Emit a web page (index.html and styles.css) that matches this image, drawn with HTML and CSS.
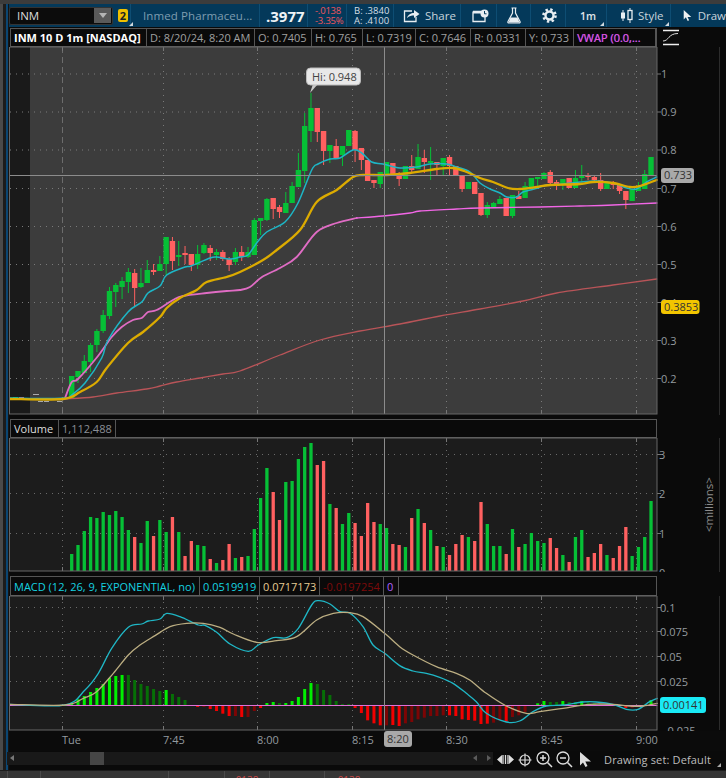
FILE: index.html
```html
<!DOCTYPE html>
<html lang="en">
<head>
<meta charset="utf-8">
<title>INM chart</title>
<link rel="stylesheet" href="styles.css">
</head>
<body>
<div class="top-strip"></div>
<div class="shell">
  <div class="rail"></div>
  <div class="main">
    <header class="toolbar">
      <div class="sec s-sym">
        <div class="combo"><span>INM</span><span class="combo-btn"><i></i></span></div>
        <span class="badge">2</span><i class="corner c-badge"></i>
      </div>
      <div class="sec s-name">Inmed Pharmaceu...</div>
      <div class="sec s-last">.3977</div>
      <div class="sec s-chg"><span>-.0138</span><span>-3.35%</span></div>
      <div class="sec s-ba"><span>B: .3840</span><span>A: .4100</span></div>
      <div class="sec s-share">
        <svg class="ico" width="17" height="15" viewBox="0 0 17 15"><path d="M9 3H1.500V13.500H13V9" fill="none" stroke="#e8eef2" stroke-width="1.300"/><path d="M4 10C5 6.500 8 5 11 5V2L16.500 6 11 10V7.500C8.500 7.500 6 8 4 10Z" fill="#e8eef2"/></svg>
        <span>Share</span>
      </div>
      <div class="sec s-cal">
        <svg class="ico" width="17" height="14" viewBox="0 0 17 14"><path d="M1 2.500H10M1 2.500V12.500H13V8" fill="none" stroke="#e8eef2" stroke-width="1.300"/><rect x="1" y="2" width="9" height="2.500" fill="#e8eef2"/><circle cx="12.500" cy="4.500" r="4" fill="#e8eef2"/><path d="M12.500 2V4.800H14.500" fill="none" stroke="#04395a" stroke-width="1"/></svg>
      </div>
      <div class="sec s-lab">
        <svg class="ico" width="14" height="17" viewBox="0 0 14 17"><path d="M4.500 1H9.500M5.500 1V6L1 14.500Q.5 16 2 16H12Q13.500 16 13 14.500L8.500 6V1" fill="none" stroke="#e8eef2" stroke-width="1.200"/><path d="M3.500 10.500H10.500L12.500 15.500H1.500Z" fill="#e8eef2"/></svg>
      </div>
      <div class="sec s-gear">
        <svg class="ico" width="15" height="15" viewBox="0 0 15 15"><circle cx="7.500" cy="7.500" r="4" fill="none" stroke="#e8eef2" stroke-width="2.400"/><circle cx="7.500" cy="7.500" r="6" fill="none" stroke="#e8eef2" stroke-width="2.600" stroke-dasharray="2.350 2.360"/></svg>
      </div>
      <div class="sec s-tf"><b>1m</b><i class="corner c-tf"></i></div>
      <div class="sec s-style">
        <svg class="ico" width="13" height="15" viewBox="0 0 13 15"><path d="M3 2V13M10 0V15" stroke="#e8eef2" stroke-width="1"/><rect x="1" y="4.500" width="4" height="6" fill="#e8eef2"/><rect x="8" y="2.500" width="4" height="9" fill="#04395a" stroke="#e8eef2" stroke-width="1.300"/></svg>
        <span>Style</span><i class="corner c-style"></i>
      </div>
      <div class="sec s-draw">
        <svg class="ico" width="12" height="15" viewBox="0 0 12 15"><path d="M1 0V13L4 10 6.500 15 8.500 14 6.300 9.500H11.500Z" fill="#f0f0f0"/></svg>
        <span>Draw</span>
      </div>
    </header>

    <section class="panel-head head-price">
      <div class="legend lg-price">
        <span class="cell title">INM 10 D 1m [NASDAQ]</span>
        <span class="cell">D: 8/20/24, 8:20 AM</span>
        <span class="cell">O: 0.7405</span>
        <span class="cell">H: 0.765</span>
        <span class="cell">L: 0.7319</span>
        <span class="cell">C: 0.7646</span>
        <span class="cell">R: 0.0331</span>
        <span class="cell">Y: 0.733</span>
        <span class="cell vwap">VWAP (0.0,...</span>
      </div>
      <svg class="study-ico" width="16" height="17" viewBox="0 0 16 17"><path d="M0 1.500H16M0 15.500H16" stroke="#eee" stroke-width="1.600"/><path d="M0 12C6 12 5 4.500 15 4.500" fill="none" stroke="#ddd" stroke-width="1"/></svg>
    </section>

    <svg class="chart" id="price" width="717" height="368" viewBox="9 47 717 368">
      <rect x="10" y="47" width="20" height="367" class="bg-pre"/>
      <rect x="30" y="47" width="627" height="367" class="bg-reg"/>
      <g id="price-plot"></g>
      <g class="lbl">
        <text x="661" y="78">1</text><text x="661" y="116">0.9</text><text x="661" y="154">0.8</text>
        <text x="661" y="193">0.7</text><text x="661" y="231">0.6</text><text x="661" y="269">0.5</text>
        <text x="661" y="307">0.4</text><text x="661" y="345">0.3</text><text x="661" y="383">0.2</text>
      </g>
      <rect x="661" y="168" width="33" height="15" rx="3" class="tag-grey"/>
      <text x="664" y="179" class="tag-text">0.733</text>
      <rect x="661" y="300" width="38.500" height="14" rx="3" class="tag-gold"/>
      <text x="664" y="311" class="tag-text">0.3853</text>
      <path d="M313 84L310 93L318 84Z" class="hi-tip"/>
      <rect x="306.500" y="68" width="54" height="17" rx="4" class="hi-box"/>
      <text x="312" y="81" class="hi-text">Hi: 0.948</text>
    </svg>

    <section class="panel-head head-sub">
      <div class="legend lg-vol">
        <span class="cell plain">Volume</span>
        <span class="cell dim">1,112,488</span>
      </div>
    </section>
    <svg class="chart" id="volume" width="717" height="134" viewBox="9 438 717 134">
      <rect x="10" y="438" width="647" height="133" class="bg-sub"/>
      <g id="volume-plot"></g>
      <g class="lbl">
        <text x="659" y="459">3</text><text x="659" y="498">2</text><text x="659" y="538">1</text><text x="659" y="577">0</text>
        <text x="0" y="0" class="millions" transform="translate(713 532) rotate(-90)">&lt;millions&gt;</text>
      </g>
    </svg>

    <section class="panel-head head-macd">
      <div class="legend lg-macd">
        <span class="cell cy">MACD (12, 26, 9, EXPONENTIAL, no)</span>
        <span class="cell cy">0.0519919</span>
        <span class="cell tan">0.0717173</span>
        <span class="cell maroon">-0.0197254</span>
        <span class="cell vio">0</span>
      </div>
    </section>
    <svg class="chart" id="macd" width="717" height="155" viewBox="9 596 717 155">
      <rect x="10" y="596" width="647" height="134" class="bg-sub"/>
      <g id="macd-plot"></g>
      <g class="lbl">
        <text x="660" y="612">0.1</text><text x="660" y="636">0.075</text><text x="660" y="661">0.05</text>
        <text x="660" y="686">0.025</text><text x="664" y="735">-0.025</text>
      </g>
      <rect x="660" y="697" width="46" height="16" rx="3" class="tag-cyan"/>
      <text x="663" y="709" class="tag-text">0.00141</text>
      <rect x="9" y="731" width="717" height="20" class="bg-axis"/>
      <g class="lbl">
        <text x="62" y="744">Tue</text><text x="163" y="744">7:45</text><text x="257" y="744">8:00</text>
        <text x="352" y="744">8:15</text><text x="446" y="744">8:30</text><text x="541" y="744">8:45</text><text x="636" y="744">9:00</text>
      </g>
      <rect x="384" y="731" width="28" height="16" rx="3" class="tag-grey"/>
      <text x="387" y="743" class="tag-text">8:20</text>
    </svg>

    <footer class="footer">
      <div class="scroll">
        <i class="arr-l"></i>
        <span class="thumb"></span>
        <i class="arr-l dimmed arr-p"></i>
        <i class="arr-r dimmed"></i>
      </div>
      <svg class="ftool" width="100" height="19" viewBox="0 0 100 19">
        <path d="M0 9.500L5 5V14ZM17 9.500L12 5V14Z" fill="#ddd"/><path d="M6 5V14M8.500 5V14M11 5V14" stroke="#ddd" stroke-width="1.300"/>
        <circle cx="28" cy="10" r="5" fill="none" stroke="#ddd" stroke-width="1.200"/><path d="M28 3.500V16.500M21.500 10H34.500" stroke="#ddd" stroke-width="1.200"/>
        <circle cx="46" cy="8" r="6" fill="none" stroke="#ddd" stroke-width="1.300"/><path d="M50.500 12.500L55 17M43 8H49M46 5V11" stroke="#ddd" stroke-width="1.500"/>
        <circle cx="66" cy="8" r="6" fill="none" stroke="#ddd" stroke-width="1.300"/><path d="M70.500 12.500L75 17M63 8H69" stroke="#ddd" stroke-width="1.500"/>
        <path d="M83 2V15.500L86 12.500 88.500 17 90.500 16 88.300 11.500H94Z" fill="#ddd"/>
      </svg>
      <span class="dset">Drawing set: Default</span>
      <i class="corner c-foot"></i>
    </footer>
  </div>
</div>
<div class="bottom-strip">
  <span class="div d1"></span><span class="div d2"></span><span class="div d3"></span><span class="div d4"></span><span class="div d5"></span><span class="div d6"></span>
  <span class="cut c1">.0138</span>
  <span class="cut c2">.0138</span>
</div>
<script src="chart.js"></script>
</body>
</html>
```
FILE: styles.css
```css
* { box-sizing: border-box; }
html, body { margin: 0; padding: 0; }
body {
  width: 726px; height: 778px; overflow: hidden; position: relative;
  background: #0a0a0a; color: #aaa;
  font-family: "Open Sans", "Noto Sans", sans-serif; font-size: 11px;
}
.top-strip { height: 4px; background: #3c3c3c; }
.shell { display: flex; height: 766px; }
.rail {
  width: 9px; flex: none;
  background: linear-gradient(90deg, #4a4a4a 0 3px, #1c1c1c 3px 6px, #0b4672 6px 8px, #141414 8px);
}
.main { width: 717px; flex: none; display: flex; flex-direction: column; }

.toolbar { display: flex; height: 23px; background: #04395a; flex: none; overflow: hidden; }
.sec {
  position: relative; flex: none; display: flex; align-items: center; height: 23px;
  border-right: 1px solid #0e4d73; white-space: nowrap;
}
.s-sym { width: 122px; gap: 5px; }
.combo {
  width: 104px; height: 18px; display: flex; align-items: center; justify-content: space-between;
  background: #0c0c0c; border: 1px solid #333; border-radius: 2px; padding-left: 7px;
  color: #dcdcdc; font-size: 11.500px;
}
.combo-btn { width: 17px; height: 15px; background: #5a5a5a; display: flex; align-items: center; justify-content: center; margin-right: 1px; }
.combo-btn i { border: 4px solid transparent; border-top: 5px solid #b5b5b5; border-bottom: 0; }
.badge { width: 10px; height: 13px; background: #efc000; border-radius: 2px; color: #222; font-weight: 700; font-size: 11px; line-height: 13px; text-align: center; }
.corner { position: absolute; width: 0; height: 0; border-style: solid; border-width: 0 0 4px 4px; border-color: transparent transparent #cfd8de transparent; }
.c-badge { left: 120px; bottom: 1px; }
.c-tf { right: 2px; bottom: 1px; }
.c-style { right: 1px; bottom: 1px; }
.c-foot { position: absolute; right: 5px; bottom: 3px; border-bottom-color: #aaa; }
.s-name { width: 129px; padding-left: 12px; color: #7f9db0; font-size: 11.500px; letter-spacing: .1px; }
.s-last { width: 48px; padding-left: 6px; color: #eef3f6; font-size: 15px; font-weight: 700; }
.s-chg, .s-ba { flex-direction: column; align-items: flex-start; justify-content: center; font-size: 9.500px; line-height: 10px; }
.s-chg { width: 39px; padding-left: 7px; color: #f0555a; letter-spacing: -.2px; }
.s-ba { width: 47px; padding-left: 7px; color: #d5dee4; }
.s-share { width: 67px; padding-left: 9px; gap: 5px; color: #c8d4dc; font-size: 11.500px; }
.s-cal { width: 36px; padding-left: 11px; }
.s-lab { width: 34px; padding-left: 10px; }
.s-gear { width: 35px; padding-left: 11px; }
.s-tf { width: 41px; padding-left: 14px; color: #e0e6ea; }
.s-tf b { font-size: 10.500px; font-weight: 600; }
.s-style { width: 64px; padding-left: 13px; gap: 5px; color: #c8d4dc; font-size: 11.500px; }
.s-draw { width: 55px; padding-left: 12px; gap: 6px; color: #c8d4dc; font-size: 11.500px; border: 0; }

.panel-head { display: flex; align-items: stretch; flex: none; padding-left: 1px; }
.head-price { height: 19px; margin-top: 1px; }
.head-sub { height: 19px; margin-top: 4px; }
.head-macd { height: 20px; margin-top: 4px; }
.legend { display: grid; width: 647px; height: 100%; background: #0a0a0a; border: 1px solid #555; border-bottom-color: #5f5f5f; }
.lg-price { grid-template-columns: 136px 108px 57px 51px 53px 55px 55px 48px 1fr; }
.lg-vol { grid-template-columns: 48px 57px 1fr; }
.lg-macd { grid-template-columns: 189px 60px 60px 64px 15px 1fr; }
.cell {
  display: flex; align-items: center; padding-left: 3px; border-right: 1px solid #555;
  white-space: nowrap; overflow: hidden; color: #a0a0a0; font-size: 11px;
}
.title { color: #fff; font-weight: 700; font-size: 11px; }
.plain { color: #dedede; }
.dim { color: #8a8f96; }
.cy { color: #16d2e0; }
.tan { color: #e5cb93; }
.maroon { color: #7c0a0a; }
.vio { color: #b060ff; }
.vwap { color: #e84ec8; text-shadow: .5px 0 #6a50ff; }
.study-ico { margin: 1px 0 0 6px; }

.chart { display: block; flex: none; }
.bg-pre { fill: #1a1a1a; }
.bg-reg { fill: #3c3c3c; }
.bg-sub { fill: #1c1c1c; }
.bg-axis { fill: #0b0b0b; }
.lbl text { fill: #949a9f; font-family: "Open Sans", sans-serif; font-size: 11px; }
.lbl .millions { fill: #8d8d8d; font-size: 11.500px; }
.tag-grey { fill: #a9a9a9; }
.tag-gold { fill: #f2c500; }
.tag-cyan { fill: #19e9f5; }
.tag-text { fill: #333; font-family: "Open Sans", sans-serif; font-size: 11px; }
.hi-box { fill: #e8e8e8; stroke: #bbb; }
.hi-tip { fill: #c9c9c9; }
.hi-text { fill: #444; font-family: "Open Sans", sans-serif; font-size: 11px; }
.line { fill: none; stroke-linejoin: round; stroke-linecap: round; }
.l-cyan { stroke: #1db6c6; stroke-width: 1.500; }
.l-gold { stroke: #dcab00; stroke-width: 2.300; }
.l-pink { stroke: #e06cc4; stroke-width: 1.800; }
.l-pink2 { stroke: #f266e6; stroke-width: 1.300; }
.l-red { stroke: #b85458; stroke-width: 1.300; }
.l-mcyan { stroke: #1fb7c6; stroke-width: 1.300; }
.l-mtan { stroke: #bcae82; stroke-width: 1.300; }
.l-zero { stroke: #e070d8; stroke-width: 1; }
.grid-dot { stroke: #7a7a7a; stroke-width: 1; stroke-dasharray: 1 5; fill: none; }
.grid-sub { stroke: #6a6a6a; }
.grid-day { stroke: #6c6c6c; stroke-width: 1; stroke-dasharray: 6 4; }
.tick { stroke: #777; stroke-width: 1; }
.frame { stroke: #666; stroke-width: 1; fill: none; }
.cross { stroke: #8c8c8c; stroke-width: 1; }
.up { fill: #06c036; }
.dn { fill: #ff6060; }
.wick-up { stroke: #06c036; stroke-width: 1; }
.wick-dn { stroke: #ff6060; stroke-width: 1; }
.premark { stroke: #aaa; stroke-width: 1; }
.h-gb { fill: #00f000; }
.h-gd { fill: #066f06; }
.h-rb { fill: #f20000; }
.h-rd { fill: #7c0505; }
.edge { stroke: #2c2c2c; stroke-width: 1; }

.footer { position: relative; display: flex; align-items: center; height: 19px; flex: none; }
.scroll {
  position: relative; width: 486px; height: 13px; margin: 0 0 5px -2px; background: #191919; flex: none;
  display: flex; align-items: center;
}
.thumb { position: absolute; left: 83px; width: 14px; height: 13px; background: #464646; }
.arr-l, .arr-r { position: absolute; width: 0; height: 0; border: 3px solid transparent; }
.arr-l { left: 3px; border-left: 0; border-right: 4px solid #777; }
.arr-p { left: 466px; }
.arr-r { left: 480px; border-right: 0; border-left: 4px solid #777; }
.dimmed { opacity: .7; }
.ftool { flex: none; margin: 0 0 3px 4px; }
.dset { margin: 0 0 3px 7px; color: #bdbdbd; font-size: 11px; letter-spacing: .15px; white-space: nowrap; }

.bottom-strip { position: relative; height: 8px; background: #353535; overflow: hidden; border-top: 1px solid #1c1c1c; }
.div { position: absolute; top: 0; bottom: 0; width: 1px; background: #4a4a4a; }
.d1 { left: 7px; }
.d2 { left: 40px; }
.d3 { left: 168px; }
.d4 { left: 224px; }
.d5 { left: 269px; }
.d6 { left: 324px; }
.cut { position: absolute; top: 2px; color: #d04a4a; font-size: 10px; }
.c1 { left: 233px; }
.c2 { left: 335px; }
```
FILE: chart.js
```js
(function () {
  var NS = 'http://www.w3.org/2000/svg';
  function el(parent, tag, attrs) {
    var n = document.createElementNS(NS, tag);
    for (var k in attrs) n.setAttribute(k, attrs[k]);
    parent.appendChild(n);
    return n;
  }
  function line(p, x1, y1, x2, y2, cls) { el(p, 'line', { x1: x1, y1: y1, x2: x2, y2: y2, 'class': cls }); }
  /* Catmull-Rom through the sampled points, so moving averages read as curves */
  function poly(p, pts, cls) {
    var d = 'M' + pts[0][0] + ' ' + pts[0][1];
    for (var i = 0; i < pts.length - 1; i++) {
      var a = pts[Math.max(i - 1, 0)], b = pts[i], c = pts[i + 1], e = pts[Math.min(i + 2, pts.length - 1)];
      var c1x = b[0] + (c[0] - a[0]) / 6, c1y = b[1] + (c[1] - a[1]) / 6;
      var c2x = c[0] - (e[0] - b[0]) / 6, c2y = c[1] - (e[1] - b[1]) / 6;
      d += 'C' + c1x.toFixed(2) + ' ' + c1y.toFixed(2) + ' ' + c2x.toFixed(2) + ' ' + c2y.toFixed(2) + ' ' + c[0].toFixed(2) + ' ' + c[1].toFixed(2);
    }
    el(p, 'path', { d: d, 'class': 'line ' + cls });
  }
  var X = function (i) { return 71.7 + 6.297 * i; };
  var VX = [62.5, 163.5, 257.5, 352.5, 446.5, 541.5, 636.5];

  function grid(p, top, bottom, ys, sub) {
    var dotCls = 'grid-dot' + (sub ? ' grid-sub' : '');
    ys.forEach(function (y) {
      line(p, 10, y, 657, y, dotCls);
      line(p, 657, y, 661, y, 'tick');
    });
    VX.forEach(function (x, i) {
      line(p, x, top, x, bottom, (i === 0 && !sub) ? 'grid-day' : dotCls);
      line(p, x, top, x, top + 4, 'tick');
      line(p, x, bottom - 4, x, bottom, 'tick');
    });
  }

  /* ---------- price ---------- */
  var C = [
    [376,376,398,398,1],[371,371,377,383,1],[355,361,373,373,1],[343,345,362,372,1],[329,331,345,352,1],
    [310,315,331,333,1],[287,291,316,319,1],[283,285,292,307,1],[277,281,287,299,1],[268,272,282,293,1],
    [269,273,288,306,0],[268,283,287,288,1],[260,270,283,283,1],[264,270,272,275,0],[256,264,271,271,1],
    [237,237,264,275,1],[237,241,261,270,0],[241,255,257,266,1],[246,253,255,264,0],[254,254,265,271,0],
    [245,254,265,269,1],[243,245,253,254,1],[245,248,253,261,0],[249,252,255,260,1],[250,252,259,261,0],
    [257,259,265,271,0],[248,252,262,265,1],[246,252,257,261,0],[247,252,257,258,1],[218,220,255,255,1],
    [218,218,221,235,1],[198,199,220,221,1],[198,198,209,219,0],[205,207,212,218,0],[192,203,213,213,1],
    [182,186,203,203,1],[153,170,187,187,1],[113,126,171,183,1],[93,108,131,142,1],[108,108,132,142,0],
    [131,131,151,165,0],[145,145,151,163,1],[139,146,158,158,0],[146,146,155,166,1],[130,130,146,146,1],
    [130,131,150,162,0],[148,148,160,170,0],[160,160,181,181,0],[180,180,183,188,0],[172,172,184,188,1],
    [162,162,176,176,1],[163,163,175,175,0],[172,173,179,186,0],[166,166,179,179,1],[155,166,170,172,0],
    [144,157,169,169,1],[150,158,162,173,0],[147,161,163,180,1],[162,162,165,175,0],[158,158,166,175,1],
    [155,157,166,175,0],[166,166,175,175,0],[175,175,189,192,0],[182,182,189,189,1],[182,182,194,194,0],
    [193,193,215,216,0],[202,205,215,218,1],[202,203,207,208,1],[196,199,204,204,1],[198,198,216,216,0],
    [195,195,216,218,1],[191,196,199,199,0],[182,186,198,198,1],[178,178,187,187,1],[177,177,179,186,1],
    [172,173,179,179,1],[170,172,183,184,0],[180,182,186,190,0],[179,179,185,190,1],[178,178,188,188,0],
    [170,178,188,188,1],[165,175,178,182,1],[173,175,177,180,0],[176,177,180,181,0],[173,180,189,191,0],
    [181,182,189,189,1],[181,183,185,189,0],[184,185,191,194,0],[191,191,200,209,0],[189,189,201,201,1],
    [182,186,191,191,1],[170,174,189,189,1],[157,157,175,175,1]
  ];
  var CY = [[10,398],[30,398.5],[65,398],[71.7,395],[85,383],[101.7,358],[108,340],[128,312],[141.7,302],[148,293],[160,286],[166.7,275],[185,267],[191,266],[210,258],[216.7,257],[230,259],[240,257],[248,255],[256.7,243],[266.7,232],[285,222],[298,203],[311.7,170],[318,164],[330,159],[340,158],[353,150],[361.7,153],[371.7,162],[383,164],[400,168],[416.7,167],[430,164],[446.7,164],[456.7,167],[470,172],[480,183],[490,189],[500,193],[506.7,197],[516.7,197],[523,192],[538,188],[546.7,185],[563,184],[580,182],[596.7,181],[613,183],[626.7,188],[636.7,189],[646.7,182],[656.7,177]];
  var GO = [[10,399],[63,399],[80,392],[96.7,382],[106.7,368],[128,343],[143,332],[160,317],[166.7,308],[180,298],[196.7,290],[206.7,282],[226.7,277],[240,272],[263,260],[276.7,250],[300,230],[316.7,202],[336.7,190],[353,177],[363,175],[386.7,175],[410,173],[436.7,169],[453,168],[466.7,172],[480,178],[493,182],[508,188],[520,189],[536.7,187],[550,185],[580,184],[593,182],[613,183],[630,187],[640,186],[656.7,180]];
  var PK = [[65,398],[71.7,382],[78,379],[98,356],[111.7,337],[121.7,327],[133,320],[141.7,318],[148,312],[156.7,310],[173,300],[183,296],[206.7,293],[226.7,291],[240,290],[250,287],[262,277],[280,268],[296.7,257],[316.7,232],[336.7,223],[356.7,218]];
  var PK2 = [[356.7,218],[383,216],[410,213],[420,211],[456.7,209],[480,208],[540,207],[580,206],[613,205],[657,203]];
  var RD = [[65,399],[93,397],[116.7,393],[146.7,389],[160,386],[176.7,382],[200,378],[223,374],[240,371],[280,355],[320,340],[360,331],[400,324],[440,316],[480,309],[523,301],[556.7,293],[613,285],[656.7,279]];

  var pp = document.getElementById('price-plot');
  grid(pp, 47, 414, [74, 112, 150, 188.5, 226.5, 264.5, 302.5, 340.5, 378.5], false);
  line(pp, 33, 394.5, 39, 394.5, 'premark');
  line(pp, 38, 401.5, 43, 401.5, 'premark');
  line(pp, 44, 401.5, 49, 401.5, 'premark');
  line(pp, 57, 401.5, 62, 401.5, 'premark');
  el(pp, 'rect', { x: 13, y: 397, width: 5, height: 2, 'class': 'up' });
  el(pp, 'rect', { x: 19, y: 397, width: 5, height: 2, 'class': 'dn' });
  poly(pp, RD, 'l-red');
  C.forEach(function (c, i) {
    var x = X(i), up = c[4] === 1;
    line(pp, x, c[0], x, c[3], up ? 'wick-up' : 'wick-dn');
    el(pp, 'rect', { x: x - 2.7, y: c[1], width: 5.4, height: Math.max(c[2] - c[1], 1), 'class': up ? 'up' : 'dn' });
  });
  poly(pp, PK, 'l-pink');
  poly(pp, PK2, 'l-pink2');
  poly(pp, CY, 'l-cyan');
  poly(pp, GO, 'l-gold');
  line(pp, 10, 175.5, 657, 175.5, 'cross');
  line(pp, 384.5, 47, 384.5, 414, 'cross');
  el(pp, 'rect', { x: 9.5, y: 47, width: 647.5, height: 367, 'class': 'frame' });
  line(pp, 719.5, 47, 719.5, 415, 'edge');

  /* ---------- volume: top of each bar in 3x-crop units; baseline 468 ---------- */
  var V = '417g 390g 348g 306g 309g 291g 300g 288g 306g 345g 366r 384g 318g 363r 315g 351g 306r 351g 423r 378r 390g 393g 432r 444g 435r 387r 429g 426r 423g 342g 249g 159g 231r 315r 201g 198g 132g 96g 84g 150r 138r 267g 279r 327g 294g 324r 363r 264r 321r 327g 339g 387r 390r 396g 309r 282g 324r 345g 393r 396g 420r 387r 360r 366g 378r 261r 327g 393g 393g 417r 342g 396r 387g 354g 378g 384g 369r 399r 420g 441r 366g 345g 426r 414r 387r 420g 429r 393r 336r 423g 396g 366g 258g'.split(' ');
  var vp = document.getElementById('volume-plot');
  grid(vp, 438, 571, [454.5, 493.5, 533.5], true);
  V.forEach(function (s, i) {
    var top = 415 + parseInt(s, 10) / 3;
    el(vp, 'rect', { x: X(i) - 1.65, y: top, width: 3.3, height: 571 - top, 'class': s.slice(-1) === 'g' ? 'up' : 'dn' });
  });
  line(vp, 384.5, 438, 384.5, 571, 'cross');
  el(vp, 'rect', { x: 9.5, y: 438, width: 647.5, height: 133, 'class': 'frame' });
  line(vp, 719.5, 438, 719.5, 572, 'edge');

  /* ---------- MACD: 3x-crop units; baseline 405 ---------- */
  var H = '398b 388b 378b 366b 354b 342b 324b 318b 315b 315d 330d 342d 348d 357d 363d 360b 372d 381d 390d 405d 411b 411d 417b 423b 431b 438b 438d 441b 441d 423d 414b 399b 396b 399d 399b 393b 381b 357b 339b 342d 360d 375d 393d 402d 402d 414b 429b 451b 460b 466b 466d 465b 468b 460d 456d 448d 443d 438d 438d 436d 436b 438b 448b 450b 452b 462b 461b 458d 452d 455b 441d 436d 426d 405d 400b 393b 396d 396d 393b 396d 396d 393b 396d 399d 402d 404d 404d 404d 414b 412b 408b 404d 390b 385b'.split(' ');
  var mp = document.getElementById('macd-plot');
  grid(mp, 596, 730, [607.5, 631.5, 656.5, 681.5], true);
  H.slice(0, 93).forEach(function (s, i) {
    var v = parseInt(s, 10), shade = s.slice(-1);
    if (v === 405) return;
    var y = 570 + v / 3, zero = 705, up = v < 405;
    el(mp, 'rect', {
      x: X(i) - 1.5, y: up ? y : zero, width: 3, height: Math.abs(y - zero),
      'class': 'h-' + (up ? 'g' : 'r') + shade
    });
  });
  line(mp, 10, 705.5, 657, 705.5, 'line l-zero');
  function z(arr, off) { return arr.map(function (a) { return [(a[0] + off) / 3, 570 + a[1] / 3]; }); }
  var mc = z([[30,403],[195,405],[255,360],[295,310],[335,235],[385,172],[425,162],[445,153],[480,147],[500,130],[540,140],[595,165],[615,166],[650,187],[690,222],[745,244],[775,225],[820,203],[860,203],[895,175],[935,105],[955,92],[990,102],[1020,125],[1050,130],[1089,170]], 0)
    .concat(z([[30,225],[65,250],[110,287],[150,303],[190,310],[230,322],[270,340],[310,370],[340,395],[370,430],[430,456],[470,453],[510,425],[550,408],[600,405],[660,396],[700,396],[750,403],[790,418],[825,418],[860,395],[883,385]], 1089));
  var mt = z([[30,403],[195,405],[250,385],[290,365],[340,310],[385,255],[420,225],[465,197],[510,170],[560,160],[610,160],[660,172],[700,192],[770,217],[830,212],[890,200],[950,150],[1000,130],[1050,128],[1089,140]], 0)
    .concat(z([[65,190],[110,230],[150,255],[220,290],[280,310],[320,330],[370,370],[430,408],[490,430],[530,425],[600,415],[680,403],[750,403],[800,408],[840,408],[883,400]], 1089));
  poly(mp, mc, 'l-mcyan');
  poly(mp, mt, 'l-mtan');
  line(mp, 384.5, 596, 384.5, 730, 'cross');
  el(mp, 'rect', { x: 9.5, y: 596, width: 647.5, height: 134, 'class': 'frame' });
  line(mp, 719.5, 596, 719.5, 730, 'edge');
})();
```
